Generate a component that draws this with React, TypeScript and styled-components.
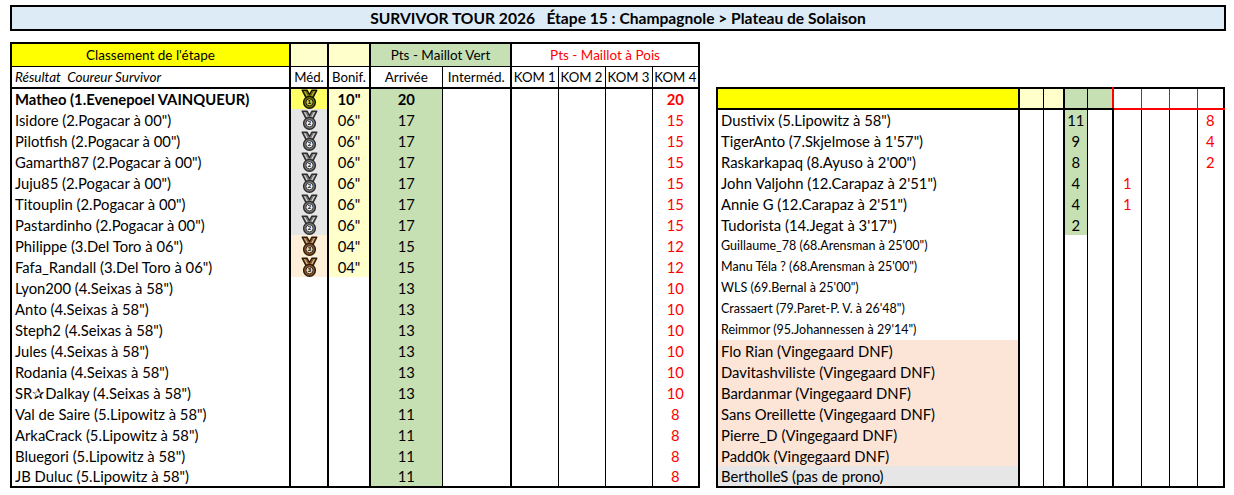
import React from 'react'
import styled, { createGlobalStyle } from 'styled-components'

type Line = 'thick' | 'thin' | 'red' | 'redThick' | 'none'
type Medal = 'gold' | 'silver' | 'bronze'

const LINE: Record<Line, string> = {
  thick: '2px solid #000',
  thin: '1px solid #000',
  red: '1px solid #ff0000',
  redThick: '2px solid #ff0000',
  none: 'none',
}

const YELLOW = '#ffff00'
const PALE = '#ffffcc'
const GREEN = '#c6e0b4'
const PEACH = '#fce4d6'
const GREY = '#e7e6e6'
const RED = '#ff0000'

const MEDAL_BG: Record<Medal, string> = {
  gold: '#ffff66',
  silver: '#e7e6e6',
  bronze: '#fdefd8',
}

const MEDAL_INK: Record<Medal, { dark: string; mid: string; light: string }> = {
  gold: { dark: '#141400', mid: '#6e6e08', light: '#c8c83a' },
  silver: { dark: '#2e2e2e', mid: '#7a7a7a', light: '#f4f4f4' },
  bronze: { dark: '#2e1c0c', mid: '#8a5a2e', light: '#f0d8b0' },
}

const GlobalStyle = createGlobalStyle`
  body {
    margin: 0;
    background: #fff;
    font-family: Lato, "Open Sans", sans-serif;
    color: #000;
  }
`

const Page = styled.div`
  padding: 5px 0 0 10px;
  width: 1234px;
  box-sizing: border-box;
`

const TitleBar = styled.div`
  width: 1216px;
  height: 26px;
  box-sizing: border-box;
  border: 2px solid #000;
  background: #ddebf7;
  font-weight: 700;
  font-size: 15.6px;
  text-align: center;
  line-height: 23px;
  white-space: pre;
`

const Tables = styled.div`
  display: flex;
  align-items: flex-start;
  gap: 16px;
  margin-top: 11px;
`

const Sheet = styled.table<{ $w: number; $top?: number }>`
  border-collapse: collapse;
  table-layout: fixed;
  width: ${p => p.$w}px;
  flex: none;
  border: 2px solid #000;
  margin-top: ${p => p.$top ?? 0}px;
`

const Col = styled.col<{ $w: number }>`
  width: ${p => p.$w}px;
`

const Row = styled.tr<{ $h?: number }>`
  height: ${p => p.$h ?? 21}px;
`

interface CellProps {
  $bg?: string;
  $color?: string;
  $align?: 'left' | 'center' | 'right';
  $bold?: boolean;
  $italic?: boolean;
  $size?: number;
  $r?: Line;
  $b?: Line;
}

const Cell = styled.td<CellProps>`
  padding: 0 1px;
  background: ${p => p.$bg ?? '#fff'};
  color: ${p => p.$color ?? '#000'};
  text-align: ${p => p.$align ?? 'center'};
  font-size: ${p => p.$size ?? 14.8}px;
  font-weight: ${p => (p.$bold ? 700 : 400)};
  font-style: ${p => (p.$italic ? 'italic' : 'normal')};
  border-right: ${p => LINE[p.$r ?? 'none']};
  border-bottom: ${p => LINE[p.$b ?? 'none']};
  white-space: nowrap;
  overflow: hidden;
  vertical-align: middle;
  line-height: 18px;
`

const HeadCell = styled(Cell).attrs<CellProps>(p => ({ $size: p.$size ?? 13.2 }))``

const NameCell = styled(Cell).attrs({ $align: 'left' as const })`
  padding-left: 3px;
`

const MedalCell = styled(Cell)`
  padding: 0;
  line-height: 0;
`

const MedalIcon = ({ kind }: { kind: Medal }) => {
  const c = MEDAL_INK[kind]
  const n = kind === 'gold' ? '1' : kind === 'silver' ? '2' : '3'
  return (
    <svg width="17" height="20" viewBox="0 0 17 20">
      <path d="M1.2 1.2 H6 L8.5 5.5 L11 1.2 H15.8 L12 8.6 H5 Z" fill={c.mid} stroke={c.dark} strokeWidth="1.4" strokeLinejoin="round" />
      <path d="M3.6 2.2 L6.6 7.8 M13.4 2.2 L10.4 7.8" fill="none" stroke={c.light} strokeWidth="0.9" />
      <circle cx="8.5" cy="13.3" r="5.9" fill={c.mid} stroke={c.dark} strokeWidth="1.4" />
      <circle cx="8.5" cy="13.3" r="3.6" fill={c.light} stroke={c.dark} strokeWidth="0.9" />
      <text x="8.5" y="15.4" textAnchor="middle" fontSize="5.6" fontWeight="700" fill={c.dark} fontFamily="DejaVu Sans, sans-serif">{n}</text>
    </svg>
  )
}

interface StageRow {
  name: string;
  medal?: Medal;
  bonif?: string;
  arrival: string;
  kom4: string;
  bold?: boolean;
}

const stageRows: StageRow[] = [
  { name: 'Matheo (1.Evenepoel VAINQUEUR)', medal: 'gold', bonif: '10"', arrival: '20', kom4: '20', bold: true },
  { name: 'Isidore (2.Pogacar à 00")', medal: 'silver', bonif: '06"', arrival: '17', kom4: '15' },
  { name: 'Pilotfish (2.Pogacar à 00")', medal: 'silver', bonif: '06"', arrival: '17', kom4: '15' },
  { name: 'Gamarth87 (2.Pogacar à 00")', medal: 'silver', bonif: '06"', arrival: '17', kom4: '15' },
  { name: 'Juju85 (2.Pogacar à 00")', medal: 'silver', bonif: '06"', arrival: '17', kom4: '15' },
  { name: 'Titouplin (2.Pogacar à 00")', medal: 'silver', bonif: '06"', arrival: '17', kom4: '15' },
  { name: 'Pastardinho (2.Pogacar à 00")', medal: 'silver', bonif: '06"', arrival: '17', kom4: '15' },
  { name: 'Philippe (3.Del Toro à 06")', medal: 'bronze', bonif: '04"', arrival: '15', kom4: '12' },
  { name: 'Fafa_Randall (3.Del Toro à 06")', medal: 'bronze', bonif: '04"', arrival: '15', kom4: '12' },
  { name: 'Lyon200 (4.Seixas à 58")', arrival: '13', kom4: '10' },
  { name: 'Anto (4.Seixas à 58")', arrival: '13', kom4: '10' },
  { name: 'Steph2 (4.Seixas à 58")', arrival: '13', kom4: '10' },
  { name: 'Jules (4.Seixas à 58")', arrival: '13', kom4: '10' },
  { name: 'Rodania (4.Seixas à 58")', arrival: '13', kom4: '10' },
  { name: 'SR✰Dalkay (4.Seixas à 58")', arrival: '13', kom4: '10' },
  { name: 'Val de Saire (5.Lipowitz à 58")', arrival: '11', kom4: '8' },
  { name: 'ArkaCrack (5.Lipowitz à 58")', arrival: '11', kom4: '8' },
  { name: 'Bluegori (5.Lipowitz à 58")', arrival: '11', kom4: '8' },
  { name: 'JB Duluc (5.Lipowitz à 58")', arrival: '11', kom4: '8' },
]

type Tone = 'plain' | 'small' | 'dnf' | 'none'

interface OtherRow {
  name: string;
  pts?: string;
  kom1?: string;
  kom4?: string;
  tone: Tone;
}

const otherRows: OtherRow[] = [
  { name: 'Dustivix (5.Lipowitz à 58")', pts: '11', kom4: '8', tone: 'plain' },
  { name: "TigerAnto (7.Skjelmose à 1'57\")", pts: '9', kom4: '4', tone: 'plain' },
  { name: "Raskarkapaq (8.Ayuso à 2'00\")", pts: '8', kom4: '2', tone: 'plain' },
  { name: "John Valjohn (12.Carapaz à 2'51\")", pts: '4', kom1: '1', tone: 'plain' },
  { name: "Annie G (12.Carapaz à 2'51\")", pts: '4', kom1: '1', tone: 'plain' },
  { name: "Tudorista (14.Jegat à 3'17\")", pts: '2', tone: 'plain' },
  { name: "Guillaume_78 (68.Arensman à 25'00\")", tone: 'small' },
  { name: "Manu Téla ? (68.Arensman à 25'00\")", tone: 'small' },
  { name: "WLS (69.Bernal à 25'00\")", tone: 'small' },
  { name: "Crassaert (79.Paret-P. V. à 26'48\")", tone: 'small' },
  { name: "Reimmor (95.Johannessen à 29'14\")", tone: 'small' },
  { name: 'Flo Rian (Vingegaard DNF)', tone: 'dnf' },
  { name: 'Davitashviliste (Vingegaard DNF)', tone: 'dnf' },
  { name: 'Bardanmar (Vingegaard DNF)', tone: 'dnf' },
  { name: 'Sans Oreillette (Vingegaard DNF)', tone: 'dnf' },
  { name: 'Pierre_D (Vingegaard DNF)', tone: 'dnf' },
  { name: 'Padd0k (Vingegaard DNF)', tone: 'dnf' },
  { name: 'BertholleS (pas de prono)', tone: 'none' },
]

const TONE_BG: Record<Tone, string> = {
  plain: '#fff',
  small: '#fff',
  dnf: PEACH,
  none: GREY,
}

const STAGE_COLS = [279, 38, 42, 72, 69, 47, 47, 47, 47]
const OTHER_COLS = [302, 24, 21, 23, 26, 28, 28, 28, 27]
const sum = (xs: number[]) => xs.reduce((a, b) => a + b, 0)

const StageTable = () => (
  <Sheet $w={sum(STAGE_COLS)}>
    <colgroup>
      {STAGE_COLS.map((w, i) => <Col key={i} $w={w} />)}
    </colgroup>
    <tbody>
      <Row $h={23}>
        <HeadCell $bg={YELLOW} $size={13.5} $r="thick" $b="thin">Classement de l'étape</HeadCell>
        <HeadCell $bg={PALE} $r="thick" $b="thin" />
        <HeadCell $bg={PALE} $r="thick" $b="thin" />
        <HeadCell $bg={GREEN} $size={13.5} $r="thick" $b="thin" colSpan={2}>Pts - Maillot Vert</HeadCell>
        <HeadCell $color={RED} $size={13.5} $b="thin" colSpan={4}>Pts - Maillot à Pois</HeadCell>
      </Row>
      <Row $h={22}>
        <NameCell $italic $size={13.5} $r="thick" $b="thick">Résultat&nbsp; Coureur Survivor</NameCell>
        <HeadCell $r="thick" $b="thick">Méd.</HeadCell>
        <HeadCell $r="thick" $b="thick">Bonif.</HeadCell>
        <HeadCell $size={13.5} $r="thin" $b="thick">Arrivée</HeadCell>
        <HeadCell $size={13.5} $r="thick" $b="thick">Interméd.</HeadCell>
        <HeadCell $r="thin" $b="thick">KOM 1</HeadCell>
        <HeadCell $r="thin" $b="thick">KOM 2</HeadCell>
        <HeadCell $r="thin" $b="thick">KOM 3</HeadCell>
        <HeadCell $b="thick">KOM 4</HeadCell>
      </Row>
      {stageRows.map(row => (
        <Row key={row.name}>
          <NameCell $bold={row.bold} $r="thick">{row.name}</NameCell>
          <MedalCell $bg={row.medal ? MEDAL_BG[row.medal] : '#fff'} $r="thick">
            {row.medal && <MedalIcon kind={row.medal} />}
          </MedalCell>
          <Cell $bg={row.bonif ? PALE : '#fff'} $bold={row.bold} $r="thick">{row.bonif}</Cell>
          <Cell $bg={GREEN} $bold={row.bold} $r="thin">{row.arrival}</Cell>
          <Cell $r="thick" />
          <Cell $r="thin" />
          <Cell $r="thin" />
          <Cell $r="thin" />
          <Cell $color={RED} $bold={row.bold}>{row.kom4}</Cell>
        </Row>
      ))}
    </tbody>
  </Sheet>
)

const OthersTable = () => (
  <Sheet $w={sum(OTHER_COLS)} $top={45}>
    <colgroup>
      {OTHER_COLS.map((w, i) => <Col key={i} $w={w} />)}
    </colgroup>
    <tbody>
      <Row>
        <Cell $bg={YELLOW} $r="thick" $b="thick" />
        <Cell $bg={PALE} $r="thin" $b="thick" />
        <Cell $bg={PALE} $r="thick" $b="thick" />
        <Cell $bg={GREEN} $r="thin" $b="thick" />
        <Cell $bg={GREEN} $r="redThick" $b="thick" />
        <Cell $r="red" $b="redThick" />
        <Cell $r="red" $b="redThick" />
        <Cell $r="red" $b="redThick" />
        <Cell $b="redThick" />
      </Row>
      {otherRows.map(row => (
        <Row key={row.name}>
          <NameCell $bg={TONE_BG[row.tone]} $size={row.tone === 'small' ? 12.5 : 14.8} $r="thick">{row.name}</NameCell>
          <Cell $r="thin" />
          <Cell $r="thick" />
          <Cell $bg={row.pts ? GREEN : '#fff'} $r="thin">{row.pts}</Cell>
          <Cell $r="thick" />
          <Cell $color={RED} $r="thin">{row.kom1}</Cell>
          <Cell $r="thin" />
          <Cell $r="thin" />
          <Cell $color={RED}>{row.kom4}</Cell>
        </Row>
      ))}
    </tbody>
  </Sheet>
)

export default function App() {
  return (
    <Page>
      <GlobalStyle />
      <TitleBar>{'SURVIVOR TOUR 2026   Étape 15 : Champagnole > Plateau de Solaison'}</TitleBar>
      <Tables>
        <StageTable />
        <OthersTable />
      </Tables>
    </Page>
  )
}
